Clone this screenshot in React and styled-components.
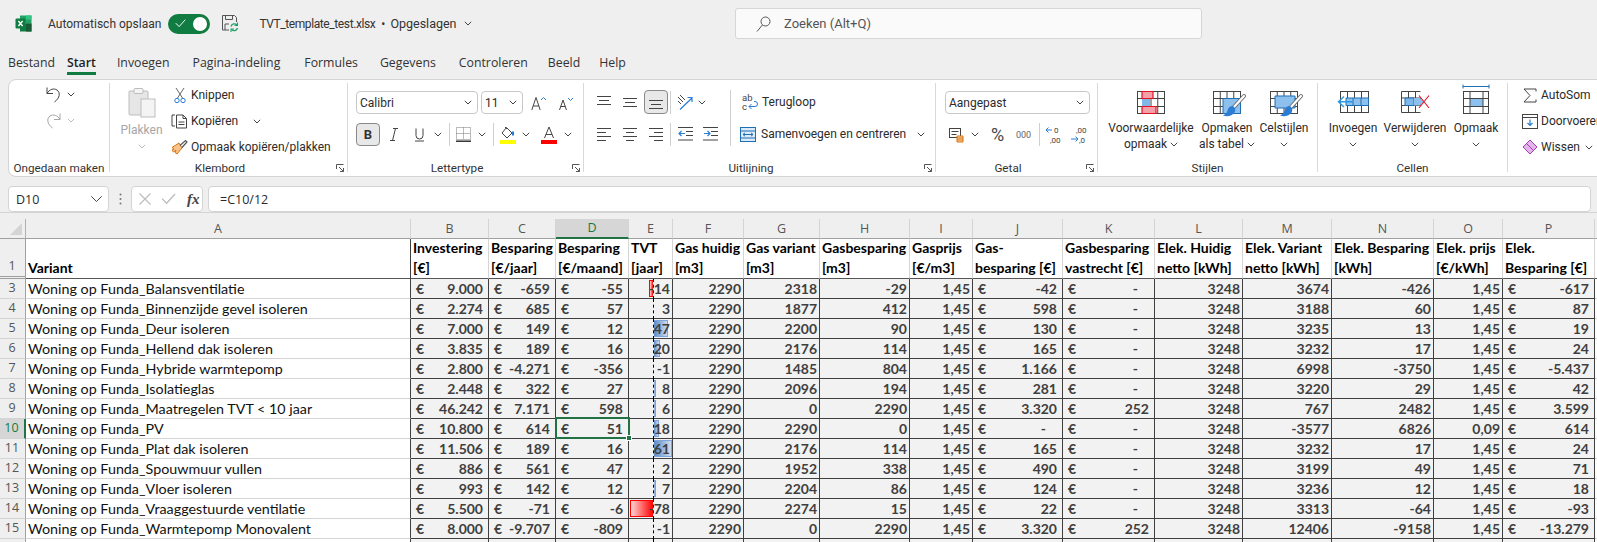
import React from 'react';
import styled, { createGlobalStyle } from 'styled-components';

const UI_FONT = 'Roboto, "Open Sans", sans-serif';

const GlobalStyle = createGlobalStyle`
  html, body {
    margin: 0;
    height: 542px;
    overflow: hidden;
    background: #efefef;
  }
`;

const Page = styled.div`
  width: 1597px;
  height: 542px;
  overflow: hidden;
  background: #efefef;
  color: #2b2b2b;
  font-family: ${UI_FONT};
  font-size: 12px;
`;

const TitleBar = styled.div`
  height: 47px;
  display: flex;
  align-items: center;
  padding-left: 15px;
`;

const TitleGroup = styled.div`
  width: 720px;
  display: flex;
  align-items: center;
  flex: none;
`;

const TitleText = styled.span`
  margin-left: ${(p) => p.$ml || 0}px;
  font-size: 12px;
  color: #333;
  white-space: nowrap;
`;

const FileName = styled(TitleText)`
  letter-spacing: -0.4px;
`;

const SaveState = styled(TitleText)`
  font-size: 12.5px;
`;

const Toggle = styled.div`
  width: 42px;
  height: 20px;
  margin-left: 7px;
  padding: 0 3px 0 7px;
  box-sizing: border-box;
  border-radius: 10px;
  background: #107c41;
  display: flex;
  align-items: center;
  justify-content: space-between;
`;

const ToggleKnob = styled.span`
  width: 14px;
  height: 14px;
  border-radius: 50%;
  background: #fff;
`;

const SearchBox = styled.div`
  width: 467px;
  height: 31px;
  padding-left: 20px;
  box-sizing: border-box;
  display: flex;
  align-items: center;
  gap: 13px;
  background: #fafafa;
  border: 1px solid #d6d6d6;
  border-radius: 3px;
  font-size: 13px;
  color: #555;
`;

const TabBar = styled.div`
  height: 32px;
  display: flex;
  align-items: flex-start;
  padding: 7px 0 0 8px;
  box-sizing: border-box;
  font-family: "Open Sans", sans-serif;
`;

const Tab = styled.div`
  margin-left: ${(p) => p.$ml}px;
  font-size: 12.3px;
  line-height: 18px;
  height: 21px;
  color: ${(p) => (p.$active ? '#1f1f1f' : '#333')};
  font-weight: ${(p) => (p.$active ? 600 : 400)};
  border-bottom: ${(p) => (p.$active ? '3px solid #107c41' : 'none')};
  box-sizing: border-box;
`;

const Ribbon = styled.div`
  margin-left: 8px;
  width: 1620px;
  height: 98px;
  box-sizing: border-box;
  display: flex;
  background: #fff;
  border: 1px solid #d4d4d4;
  border-radius: 8px;
`;

const Group = styled.div`
  width: ${(p) => p.$w}px;
  flex: none;
  display: flex;
  flex-direction: column;
  box-sizing: border-box;
  border-right: ${(p) => (p.$last ? 'none' : '1px solid #d9d9d9')};
  margin: 3px 0 4px;
`;

const GroupBody = styled.div`
  flex: 1;
  min-height: 0;
  display: flex;
  align-items: flex-start;
  padding-top: ${(p) => p.$pt || 0}px;
  margin-top: -3px;
`;

const GroupFooter = styled.div`
  height: 8px;
  display: flex;
  align-items: center;
  font-size: 11.7px;
  color: #333;
`;

const GroupLabel = styled.span`
  flex: 1;
  text-align: center;
  white-space: nowrap;
`;

const LauncherBox = styled.span`
  width: 8px;
  margin: 0 3px 0 6px;
  display: flex;
`;

const Col = styled.div`
  display: flex;
  flex-direction: column;
  gap: ${(p) => p.$gap || 0}px;
  margin-left: ${(p) => p.$ml || 0}px;
  margin-top: ${(p) => p.$mt || 0}px;
  width: ${(p) => (p.$w ? `${p.$w}px` : 'auto')};
  flex: none;
`;

const ToolRow = styled.div`
  display: flex;
  align-items: center;
  height: ${(p) => p.$h}px;
  margin-left: ${(p) => p.$ml || 0}px;
  white-space: nowrap;
`;

const Tool = styled.span`
  width: ${(p) => p.$w}px;
  margin-left: ${(p) => p.$ml || 0}px;
  flex: none;
  display: flex;
  justify-content: center;
  align-items: center;
  height: 100%;
`;

const PressedTool = styled(Tool)`
  background: #e8e8e8;
  border: 1px solid #8a8a8a;
  border-radius: 4px;
  box-sizing: border-box;
  font-weight: 700;
  font-size: 13px;
  color: #333;
`;

const PercentMark = styled(Tool)`
  font-size: 18px;
  color: #444;
`;

const ThousandMark = styled(Tool)`
  font-size: 9px;
  color: #666;
`;

const ToolLabel = styled.span`
  margin-left: ${(p) => p.$ml || 3}px;
  font-size: 12px;
  color: #2b2b2b;
`;

const Divider = styled.span`
  width: 1px;
  height: ${(p) => p.$h || 23}px;
  margin-left: ${(p) => p.$ml || 0}px;
  background: #d0d0d0;
  flex: none;
`;

const SelectBox = styled.div`
  width: ${(p) => p.$w}px;
  height: 100%;
  margin-left: ${(p) => p.$ml || 0}px;
  padding: 0 5px 0 3px;
  box-sizing: border-box;
  display: flex;
  align-items: center;
  justify-content: space-between;
  background: #fff;
  border: 1px solid #c8c8c8;
  border-radius: 4px;
  font-size: 12px;
  color: #2b2b2b;
`;

const BigButton = styled.div`
  width: ${(p) => p.$w}px;
  margin-left: ${(p) => p.$ml || 0}px;
  flex: none;
  display: flex;
  flex-direction: column;
  align-items: center;
  font-size: 12px;
  line-height: 16px;
  text-align: center;
  color: ${(p) => (p.$muted ? '#a6a6a6' : '#2b2b2b')};
  white-space: nowrap;
`;

const BigIcon = styled.span`
  height: 28px;
  margin-bottom: 4px;
  display: flex;
  align-items: center;
`;

const PasteIcon = styled(BigIcon)`
  height: 31px;
`;

const ChevLine = styled.span`
  display: flex;
  align-items: center;
  justify-content: center;
  gap: 3px;
  height: 16px;
`;

const FormulaBar = styled.div`
  height: 26px;
  margin: 9px 0 7px 8px;
  display: flex;
  align-items: stretch;
`;

const NameBox = styled.div`
  width: 101px;
  padding: 0 5px 0 7px;
  box-sizing: border-box;
  display: flex;
  align-items: center;
  justify-content: space-between;
  background: #fff;
  border: 1px solid #d4d4d4;
  border-radius: 4px;
  font-family: "Open Sans", sans-serif;
  font-size: 12.5px;
`;

const GripDots = styled.div`
  width: 22px;
  display: flex;
  align-items: center;
  justify-content: center;
`;

const FormulaTools = styled.div`
  width: 72px;
  padding-left: 7px;
  box-sizing: border-box;
  display: flex;
  align-items: center;
  gap: 10px;
  background: #fff;
  border: 1px solid #d4d4d4;
  border-radius: 4px;
`;

const FxMark = styled.span`
  font-family: "Liberation Serif", serif;
  font-style: italic;
  font-weight: 700;
  font-size: 15px;
  color: #444;
  margin-left: 1px;
`;

const FormulaInput = styled.div`
  flex: 1;
  margin: 0 6px 0 5px;
  padding-left: 11px;
  display: flex;
  align-items: center;
  background: #fff;
  border: 1px solid #d4d4d4;
  border-radius: 4px;
  font-family: "Open Sans", sans-serif;
  font-size: 12.5px;
`;

const COLUMNS = [26, 385, 78, 67, 73, 44, 71, 76, 90, 63, 90, 92, 88, 89, 102, 69, 92, 20];

const Sheet = styled.div`
  display: grid;
  grid-template-columns: ${COLUMNS.map((w) => `${w}px`).join(' ')};
  grid-template-rows: 20px 40px repeat(14, 20px);
  font-family: Lato, "Open Sans", sans-serif;
  font-size: 14px;
  line-height: 20px;
  background: #fff;
  border-top: 1px solid #d4d4d4;
  margin-top: -7px;
  padding-top: 6px;
  background-clip: content-box;
`;

const Corner = styled.div`
  background: #efefef;
  border-right: 1px solid #b0b0b0;
  border-bottom: 1px solid #a0a0a0;
  display: flex;
  align-items: flex-end;
  justify-content: flex-end;
  padding: 0 3px 3px 0;
`;

const ColHead = styled.div`
  background: ${(p) => (p.$active ? '#d6d6d6' : '#efefef')};
  color: ${(p) => (p.$active ? '#107c41' : '#555')};
  border-right: 1px solid #d4d4d4;
  border-bottom: ${(p) => (p.$active ? '2px solid #217346' : '1px solid #a0a0a0')};
  box-sizing: border-box;
  font-family: "Open Sans", sans-serif;
  font-size: 12.5px;
  display: flex;
  align-items: center;
  justify-content: center;
`;

const RowHead = styled.div`
  background: ${(p) => (p.$active ? '#d6d6d6' : '#efefef')};
  color: ${(p) => (p.$active ? '#107c41' : '#555')};
  border-right: ${(p) => (p.$active ? '2px solid #217346' : '1px solid #a0a0a0')};
  border-bottom: ${(p) => (p.$double ? '3px double #a0a0a0' : '1px solid #d4d4d4')};
  box-sizing: border-box;
  font-family: "Open Sans", sans-serif;
  font-size: 12.5px;
  padding-right: 1px;
  display: flex;
  align-items: flex-end;
  justify-content: center;
`;

const HeadCell = styled.div`
  background: #fff;
  color: #000;
  font-weight: 700;
  border-right: 1px solid ${(p) => (p.$dark ? '#3f3f3f' : '#d4d4d4')};
  border-bottom: 1px solid #555;
  box-sizing: border-box;
  padding: 0 0 0 2px;
  display: flex;
  flex-direction: column;
  justify-content: flex-end;
  white-space: nowrap;
  overflow: hidden;
`;

const NameCell = styled.div`
  background: #fff;
  color: #111;
  font-size: 14.3px;
  border-bottom: 1px solid #d4d4d4;
  box-sizing: border-box;
  padding-left: 2px;
  white-space: nowrap;
  border-right: 1px solid #3f3f3f;
`;

const DataCell = styled.div`
  position: relative;
  background: #f2f2f2;
  color: #3f3f3f;
  font-weight: 700;
  border-right: 1px solid #3f3f3f;
  border-bottom: 1px solid #3f3f3f;
  box-sizing: border-box;
  padding: 0 ${(p) => (p.$dash ? 16 : p.$money ? 5 : 2)}px 0 5px;
  display: flex;
  justify-content: ${(p) => (p.$money ? 'space-between' : 'flex-end')};
  white-space: nowrap;
`;

const Axis = styled.span`
  position: absolute;
  left: 24px;
  top: 0;
  bottom: -1px;
  border-left: 1px dashed #000;
`;

const DataBar = styled.span`
  position: absolute;
  top: 1px;
  bottom: 1px;
  box-sizing: border-box;
  ${(p) =>
    p.$negative
      ? `
    right: 19px;
    border: 1px solid #f00;
    border-right: none;
    background: linear-gradient(to right, #ffd6d6, #f00);
  `
      : `
    left: 25px;
    border: 1px solid #7fa6dc;
    border-left: none;
    background: linear-gradient(to right, #5a8ac6, #cfdcf0);
  `}
`;

const CellValue = styled.span`
  position: relative;
`;

const Selection = styled.span`
  position: absolute;
  left: -1px;
  top: -2px;
  right: -2px;
  bottom: -1px;
  border: 2px solid #217346;
  pointer-events: none;
  z-index: 2;
`;

const FillHandle = styled.span`
  position: absolute;
  right: -4px;
  bottom: -4px;
  width: 6px;
  height: 6px;
  background: #217346;
  border: 1px solid #fff;
  box-sizing: border-box;
`;

const HEADERS = [
  ['Investering', '[€]'],
  ['Besparing', '[€/jaar]'],
  ['Besparing', '[€/maand]'],
  ['TVT', '[jaar]'],
  ['Gas huidig', '[m3]'],
  ['Gas variant', '[m3]'],
  ['Gasbesparing', '[m3]'],
  ['Gasprijs', '[€/m3]'],
  ['Gas-', 'besparing [€]'],
  ['Gasbesparing', 'vastrecht [€]'],
  ['Elek. Huidig', 'netto [kWh]'],
  ['Elek. Variant', 'netto [kWh]'],
  ['Elek. Besparing', '[kWh]'],
  ['Elek. prijs', '[€/kWh]'],
  ['Elek.', 'Besparing [€]'],
];

const LETTERS = 'ABCDEFGHIJKLMNOP'.split('');
const MONEY_COLS = [0, 1, 2, 8, 9, 14];
const TVT_COL = 3;

const ROWS = [
  [3, 'Balansventilatie', '9.000', '-659', '-55', '-14', '2290', '2318', '-29', '1,45', '-42', '-', '3248', '3674', '-426', '1,45', '-617'],
  [4, 'Binnenzijde gevel isoleren', '2.274', '685', '57', '3', '2290', '1877', '412', '1,45', '598', '-', '3248', '3188', '60', '1,45', '87'],
  [5, 'Deur isoleren', '7.000', '149', '12', '47', '2290', '2200', '90', '1,45', '130', '-', '3248', '3235', '13', '1,45', '19'],
  [6, 'Hellend dak isoleren', '3.835', '189', '16', '20', '2290', '2176', '114', '1,45', '165', '-', '3248', '3232', '17', '1,45', '24'],
  [7, 'Hybride warmtepomp', '2.800', '-4.271', '-356', '-1', '2290', '1485', '804', '1,45', '1.166', '-', '3248', '6998', '-3750', '1,45', '-5.437'],
  [8, 'Isolatieglas', '2.448', '322', '27', '8', '2290', '2096', '194', '1,45', '281', '-', '3248', '3220', '29', '1,45', '42'],
  [9, 'Maatregelen TVT < 10 jaar', '46.242', '7.171', '598', '6', '2290', '0', '2290', '1,45', '3.320', '252', '3248', '767', '2482', '1,45', '3.599'],
  [10, 'PV', '10.800', '614', '51', '18', '2290', '2290', '0', '1,45', '-', '-', '3248', '-3577', '6826', '0,09', '614'],
  [11, 'Plat dak isoleren', '11.506', '189', '16', '61', '2290', '2176', '114', '1,45', '165', '-', '3248', '3232', '17', '1,45', '24'],
  [12, 'Spouwmuur vullen', '886', '561', '47', '2', '2290', '1952', '338', '1,45', '490', '-', '3248', '3199', '49', '1,45', '71'],
  [13, 'Vloer isoleren', '993', '142', '12', '7', '2290', '2204', '86', '1,45', '124', '-', '3248', '3236', '12', '1,45', '18'],
  [14, 'Vraaggestuurde ventilatie', '5.500', '-71', '-6', '-78', '2290', '2274', '15', '1,45', '22', '-', '3248', '3313', '-64', '1,45', '-93'],
  [15, 'Warmtepomp Monovalent', '8.000', '-9.707', '-809', '-1', '2290', '0', '2290', '1,45', '3.320', '252', '3248', '12406', '-9158', '1,45', '-13.279'],
];

const Chev = ({ color = '#444', size = 8 }) => (
  <svg width={size} height={size * 0.625} viewBox="0 0 8 5" fill="none" stroke={color} strokeWidth={8 / size}>
    <path d="M.8.8 4 4 7.200.8" />
  </svg>
);

const ExcelLogo = () => (
  <svg width="17" height="17" viewBox="0 0 17 17">
    <rect x="5" y="0.5" width="11.5" height="8" fill="#21a366" />
    <rect x="11" y="0.5" width="5.5" height="4" fill="#33c481" />
    <rect x="5" y="8.5" width="11.5" height="8" fill="#107c41" />
    <rect x="11" y="8.5" width="5.5" height="8" fill="#185c37" />
    <rect x="0.5" y="3.5" width="10" height="10" rx="1" fill="#107c41" />
    <path d="M3.400 6 7.600 11M7.600 6 3.400 11" stroke="#fff" strokeWidth="1.400" />
  </svg>
);

const SaveSync = () => (
  <svg width="18" height="19" viewBox="0 0 18 19" fill="none">
    <path d="M8 16H1.500V1.500h12l2 2V8" stroke="#555" />
    <path d="M4.500 1.500v4h7v-4M4 16v-6h4" stroke="#555" />
    <path d="M10 12.500a3.500 3.500 0 0 1 6-1.500M16.500 14a3.500 3.500 0 0 1-6 1.500" stroke="#21a366" strokeWidth="1.300" />
    <path d="M16.500 8.500v3h-3M10 18v-3h3" stroke="#21a366" strokeWidth="1.100" />
  </svg>
);

const SearchGlass = () => (
  <svg width="15" height="16" viewBox="0 0 15 16" fill="none" stroke="#555">
    <circle cx="9.500" cy="5.500" r="4.500" />
    <path d="M6.400 9 1 15.500" />
  </svg>
);

const Launcher = () => (
  <LauncherBox>
    <svg width="8" height="8" viewBox="0 0 8 8" fill="none" stroke="#555">
      <path d="M.5 5V.5H7.500M3 3l4.500 4.500M7.500 4v3.500H4" />
    </svg>
  </LauncherBox>
);

const UndoIcon = () => (
  <svg width="15" height="17" viewBox="0 0 15 17" fill="none" stroke="#444">
    <path d="M1 1.500v6h6" />
    <path d="M1 7.500C3.500 3 8 2 11 4c3.500 2.500 3 8-2.500 12" />
  </svg>
);

const RedoIcon = () => (
  <svg width="15" height="17" viewBox="0 0 15 17" fill="none" stroke="#a6a6a6">
    <path d="M14 1.500v6H8" />
    <path d="M14 7.500C11.500 3 7 2 4 4c-3.500 2.500-3 8 2.500 12" />
  </svg>
);

const ClipboardIcon = () => (
  <svg width="28" height="31" viewBox="0 0 28 31">
    <rect x="1" y="4" width="19" height="24" rx="1" fill="#e6e6e6" stroke="#bdbdbd" />
    <rect x="6" y="1.500" width="9" height="5" rx="1" fill="#f4f4f4" stroke="#bdbdbd" />
    <rect x="13" y="12" width="14" height="18" fill="#f4f4f4" stroke="#bdbdbd" />
  </svg>
);

const ScissorsIcon = () => (
  <svg width="12" height="17" viewBox="0 0 12 17" fill="none">
    <path d="M2 1l6.500 10M10 1 3.500 11" stroke="#666" />
    <circle cx="3" cy="13.500" r="2.200" stroke="#2b7cd3" />
    <circle cx="9" cy="13.500" r="2.200" stroke="#2b7cd3" />
  </svg>
);

const CopyIcon = () => (
  <svg width="17" height="15" viewBox="0 0 17 15" fill="none" stroke="#444">
    <path d="M4 1H1v11h3" />
    <path d="M5.500 1H12l3.500 3.500V14h-10zM12 1v3.500h3.500M7.500 8h6M7.500 10.500h6" />
  </svg>
);

const BrushIcon = () => (
  <svg width="17" height="16" viewBox="0 0 17 16" fill="none">
    <path d="M1 8.500 8 4l3 5-5 6-2-1.500L5 11l-2.500 2L1 11l2-1z" fill="#f9c48a" stroke="#d9730d" />
    <path d="M9 6.500 14.500 1.500l1.500 1.500-5 5.500" stroke="#555" strokeWidth="1.200" />
  </svg>
);

const GrowA = ({ up, big }) => (
  <svg width="16" height="16" viewBox="0 0 16 16" fill="none">
    <path d={big ? 'M.8 15 5 2.500 9.200 15M2.200 11h5.600' : 'M1.500 15 5 5l3.500 10M2.800 11.500h4.400'} stroke="#444" />
    <path d={up ? 'M10 5l2.500-2.500L15 5' : 'M10 3l2.500 2.500L15 3'} stroke="#2b7cd3" />
  </svg>
);

const ItalicI = () => (
  <svg width="8" height="13" viewBox="0 0 8 13" fill="none" stroke="#444">
    <path d="M3 .5h5M0 12.500h5M5.500.5 2.500 12.500" />
  </svg>
);

const UnderlineU = () => (
  <svg width="9" height="14" viewBox="0 0 9 14" fill="none" stroke="#444">
    <path d="M1 .5v7a3.500 3.500 0 0 0 7 0v-7M0 13h9" />
  </svg>
);

const BorderIcon = () => (
  <svg width="15" height="15" viewBox="0 0 15 15" fill="none">
    <path d="M.5.5h14v12H.5zM7.500.5v12M.5 6.500h14" stroke="#777" strokeDasharray="1 1" />
    <path d="M0 14.200h15" stroke="#222" strokeWidth="1.400" />
  </svg>
);

const FillIcon = () => (
  <svg width="16" height="18" viewBox="0 0 16 18" fill="none">
    <path d="M6.500 1.500 12 7l-5 5-5-5zM5 1l2 2" stroke="#444" />
    <path d="M13 5.500v4" stroke="#2b7cd3" strokeWidth="2" />
    <rect y="14" width="16" height="4" fill="#ffff00" />
  </svg>
);

const FontColorIcon = () => (
  <svg width="16" height="18" viewBox="0 0 16 18" fill="none">
    <path d="M3.500 12 8 1l4.500 11M5 8.500h6" stroke="#444" />
    <rect y="14" width="16" height="4" fill="#ff0000" />
  </svg>
);

const Lines = ({ rows }) => (
  <svg width="14" height="14" viewBox="0 0 14 14" fill="none" stroke="#444">
    {rows.map((r) => (
      <path key={r[0]} d={`M${r[1]} ${r[0] + 0.5}H${r[2]}`} />
    ))}
  </svg>
);

const OrientIcon = () => (
  <svg width="17" height="17" viewBox="0 0 17 17" fill="none">
    <path d="M1 3 6 8M3 1l5 5M1 7l3 3" stroke="#444" />
    <path d="M3 15.500 15 4M10.500 3.500H15V8" stroke="#2b7cd3" strokeWidth="1.200" />
  </svg>
);

const IndentIcon = ({ flip }) => (
  <svg width="15" height="14" viewBox="0 0 15 14" fill="none">
    <path d="M0 .5h15M8 4.500h7M8 8.500h7M0 13h15" stroke="#444" />
    <path
      d={flip ? 'M1 6.500h6M4.500 4 7 6.500 4.500 9' : 'M7 6.500H1M3.500 4 1 6.500 3.500 9'}
      stroke="#2b7cd3"
      strokeWidth="1.200"
    />
  </svg>
);

const WrapIcon = () => (
  <svg width="17" height="19" viewBox="0 0 17 19" fill="none" overflow="visible">
    <text x="0" y="8" fontSize="9.500" fontFamily="Roboto" fill="#444">ab</text>
    <text x="0" y="17" fontSize="9.500" fontFamily="Roboto" fill="#444">c</text>
    <path d="M7 13.500h6a2.500 2.500 0 0 0 0-5h-1M7 13.500l2.500-2.500M7 13.500 9.500 16" stroke="#2b7cd3" />
  </svg>
);

const MergeIcon = () => (
  <svg width="16" height="15" viewBox="0 0 16 15" fill="none">
    <rect x=".5" y=".5" width="15" height="14" fill="#dcebf9" stroke="#1f6fb5" />
    <path d="M.5 4h15M.5 11h15" stroke="#1f6fb5" />
    <path d="M3 7.500h10M5 5.800 3 7.500l2 1.700M11 5.800l2 1.700-2 1.700" stroke="#1f6fb5" />
  </svg>
);

const CurrencyIcon = () => (
  <svg width="16" height="16" viewBox="0 0 16 16" fill="none">
    <rect x=".5" y="1.500" width="11" height="9" fill="#fff" stroke="#444" />
    <path d="M2.500 4.500h7M2.500 7.500h5" stroke="#444" />
    <path d="M8 9h6v6H8z" fill="#fbd5ad" stroke="#d9730d" />
    <path d="M8 11h6M8 13h6" stroke="#d9730d" />
  </svg>
);

const DecimalIcon = ({ more }) => (
  <svg width="15" height="18" viewBox="0 0 15 18" fill="none" overflow="visible">
    <text x={more ? 5 : 9} y="7" fontSize="8" fontFamily="Roboto" fill="#444">{more ? ',00' : '0'}</text>
    <text x={more ? 8 : 5} y="16.500" fontSize="8" fontFamily="Roboto" fill="#444">{more ? ',0' : ',00'}</text>
    <path
      d={more ? 'M0 13h7M4.500 10.500 7 13l-2.500 2.500' : 'M7 4H1M3.500 1.500 1 4l2.500 2.500'}
      stroke="#2b7cd3"
    />
  </svg>
);

const GridLines = () => (
  <g stroke="#444">
    <rect x="1.500" y="3.500" width="27" height="22" />
    <path d="M8.250 3.500v22M15 3.500v22M21.750 3.500v22M1.500 10.500h27M1.500 18.500h27" />
  </g>
);

const Brush = () => (
  <g>
    <path d="M32 8 21.500 19.500" stroke="#666" strokeWidth="4" strokeLinecap="round" />
    <path d="M32 8 21.500 19.500" stroke="#fff" strokeWidth="2.200" strokeLinecap="round" />
    <path d="M21 18c-3 0-5 2-5.500 4.500-.3 2-2 4-4.500 5 4 1.500 9.500.5 11.500-3 1-2 1.500-4-1.500-6.500z" fill="#2b7cd3" />
  </g>
);

const CondIcon = () => (
  <svg width="30" height="28" viewBox="0 0 30 28" fill="none">
    <GridLines />
    <path d="M6 3.500h11v7H6zM6 18.500h14v7H6z" fill="#f4a0a8" />
    <path d="M6 10.500h8v8H6z" fill="#7fb8e8" />
    <path d="M6 3.500h11v7H6zM6 18.500h14v7H6z" stroke="#e81123" strokeWidth="1.200" />
  </svg>
);

const TableIcon = () => (
  <svg width="30" height="28" viewBox="0 0 30 28" fill="none" overflow="visible">
    <GridLines />
    <path d="M11 10.500h17.500v15H11z" fill="#8dc0ec" stroke="#1f6fb5" />
    <Brush />
  </svg>
);

const StyleIcon = () => (
  <svg width="30" height="28" viewBox="0 0 30 28" fill="none" overflow="visible">
    <GridLines />
    <path d="M6 8h20v12H6z" fill="#8dc0ec" stroke="#1f6fb5" />
    <Brush />
  </svg>
);

const InsertIcon = () => (
  <svg width="32" height="28" viewBox="0 0 32 28" fill="none">
    <rect x="3.500" y="3.500" width="28" height="21" stroke="#444" />
    <path d="M10.500 3.500v21M17.500 3.500v21M24.500 3.500v21" stroke="#444" />
    <path d="M9 10h22.500v7.500H9z" fill="#8dc0ec" stroke="#1f6fb5" />
    <path d="M16 10v7.500M24 10v7.500" stroke="#1f6fb5" />
    <path d="M15 13.700H2M7 8.500l-5.500 5.200L7 19" stroke="#2b9be8" strokeWidth="1.500" />
  </svg>
);

const DeleteIcon = () => (
  <svg width="31" height="28" viewBox="0 0 31 28" fill="none">
    <path d="M1.500 3.500h19M1.500 24.500h19M1.500 3.500v21M8.500 3.500v21M15.500 3.500v21" stroke="#444" />
    <path d="M1.500 10h19v7.500H1.500z" fill="#fff" stroke="#444" />
    <path d="M5 10h9v7.500H5z" fill="#7fb8e8" stroke="#1f6fb5" />
    <path d="M14 10h6l4 3.700-4 3.800h-6z" fill="#8dc0ec" />
    <path d="M19 7.500 29 20M29 7.500 19 20" stroke="#e81123" strokeWidth="1.100" />
  </svg>
);

const FormatIcon = () => (
  <svg width="28" height="28" viewBox="0 0 28 28" fill="none" overflow="visible">
    <path d="M1 -1.500h26M1 -3.500v4M27 -3.500v4" stroke="#1f6fb5" />
    <rect x="1.500" y="3.500" width="25" height="22" stroke="#444" />
    <path d="M8 10.500h13v8H8z" fill="#8dc0ec" />
    <path d="M8 3.500v22M21 3.500v22M1.500 10.500h25M1.500 18.500h25" stroke="#444" />
  </svg>
);

const SigmaIcon = () => (
  <svg width="14" height="15" viewBox="0 0 14 15" fill="none" stroke="#444">
    <path d="M13 3.500V1H1l6 6.500L1 14h12v-2.500" />
  </svg>
);

const FillDownIcon = () => (
  <svg width="16" height="15" viewBox="0 0 16 15" fill="none">
    <rect x=".5" y=".5" width="15" height="14" stroke="#444" />
    <path d="M.5 3.500h15" stroke="#444" />
    <path d="M8 5.500v6M5.500 9 8 11.500 10.500 9" stroke="#2b7cd3" strokeWidth="1.200" />
  </svg>
);

const EraserIcon = () => (
  <svg width="16" height="16" viewBox="0 0 16 16" fill="none" stroke="#a63fb5">
    <path d="M8 1 15 8l-7 7-7-7z" fill="#e3b5ea" />
    <path d="M4.500 4.500 11.500 11.500" />
  </svg>
);

const CrossMark = () => (
  <svg width="12" height="12" viewBox="0 0 12 12" fill="none" stroke="#bdbdbd" strokeWidth="1.200">
    <path d="M.5.5l11 11M11.500.5l-11 11" />
  </svg>
);

const CheckMark = ({ color = '#bdbdbd', size = 15 }) => (
  <svg width={size} height={size * 0.75} viewBox="0 0 16 12" fill="none" stroke={color} strokeWidth="1.400">
    <path d="M1 6l5 5L15 1" />
  </svg>
);

const App = () => {
  return (
    <Page>
      <GlobalStyle />
      <TitleBar>
        <TitleGroup>
          <ExcelLogo />
          <TitleText $ml={16}>Automatisch opslaan</TitleText>
          <Toggle>
            <CheckMark color="#fff" size={11} />
            <ToggleKnob />
          </Toggle>
          <Tool $w={18} $ml={11}><SaveSync /></Tool>
          <FileName $ml={20}>TVT_template_test.xlsx</FileName>
          <TitleText $ml={6}>•</TitleText>
          <SaveState $ml={5}>Opgeslagen</SaveState>
          <Tool $w={8} $ml={7}><Chev /></Tool>
        </TitleGroup>
        <SearchBox>
          <SearchGlass />
          Zoeken (Alt+Q)
        </SearchBox>
      </TitleBar>

      <TabBar>
        <Tab $ml={0}>Bestand</Tab>
        <Tab $ml={12} $active>Start</Tab>
        <Tab $ml={21}>Invoegen</Tab>
        <Tab $ml={23}>Pagina-indeling</Tab>
        <Tab $ml={24}>Formules</Tab>
        <Tab $ml={22}>Gegevens</Tab>
        <Tab $ml={23}>Controleren</Tab>
        <Tab $ml={20}>Beeld</Tab>
        <Tab $ml={19}>Help</Tab>
      </TabBar>

      <Ribbon>
        <Group $w={101}>
          <GroupBody $pt={1}>
            <Col>
              <ToolRow $h={26}>
                <Tool $w={15} $ml={37}><UndoIcon /></Tool>
                <Tool $w={8} $ml={6}><Chev /></Tool>
              </ToolRow>
              <ToolRow $h={26}>
                <Tool $w={15} $ml={37}><RedoIcon /></Tool>
                <Tool $w={8} $ml={6}><Chev color="#bbb" /></Tool>
              </ToolRow>
            </Col>
          </GroupBody>
          <GroupFooter>
            <GroupLabel>Ongedaan maken</GroupLabel>
          </GroupFooter>
        </Group>

        <Group $w={238}>
          <GroupBody $pt={7}>
            <BigButton $w={41} $ml={11} $muted>
              <PasteIcon><ClipboardIcon /></PasteIcon>
              Plakken
              <ChevLine><Chev color="#bbb" /></ChevLine>
            </BigButton>
            <Col $ml={9} $mt={-5}>
              <ToolRow $h={26}>
                <Tool $w={17}><ScissorsIcon /></Tool>
                <ToolLabel>Knippen</ToolLabel>
              </ToolRow>
              <ToolRow $h={26}>
                <Tool $w={17}><CopyIcon /></Tool>
                <ToolLabel>Kopiëren</ToolLabel>
                <Tool $w={8} $ml={15}><Chev /></Tool>
              </ToolRow>
              <ToolRow $h={26}>
                <Tool $w={17}><BrushIcon /></Tool>
                <ToolLabel>Opmaak kopiëren/plakken</ToolLabel>
              </ToolRow>
            </Col>
          </GroupBody>
          <GroupFooter>
            <GroupLabel>Klembord</GroupLabel>
            <Launcher />
          </GroupFooter>
        </Group>

        <Group $w={236}>
          <GroupBody $pt={11}>
            <Col $gap={9}>
              <ToolRow $h={23}>
                <SelectBox $w={122} $ml={8}>Calibri<Chev /></SelectBox>
                <SelectBox $w={42} $ml={3}>11<Chev /></SelectBox>
                <Tool $w={16} $ml={8}><GrowA up big /></Tool>
                <Tool $w={16} $ml={11}><GrowA /></Tool>
              </ToolRow>
              <ToolRow $h={23}>
                <PressedTool $w={24} $ml={8}>B</PressedTool>
                <Tool $w={8} $ml={10}><ItalicI /></Tool>
                <Tool $w={9} $ml={17}><UnderlineU /></Tool>
                <Tool $w={8} $ml={10}><Chev /></Tool>
                <Divider $ml={7} />
                <Tool $w={15} $ml={6}><BorderIcon /></Tool>
                <Tool $w={8} $ml={7}><Chev /></Tool>
                <Divider $ml={7} />
                <Tool $w={16} $ml={6}><FillIcon /></Tool>
                <Tool $w={8} $ml={6}><Chev /></Tool>
                <Tool $w={16} $ml={11}><FontColorIcon /></Tool>
                <Tool $w={8} $ml={7}><Chev /></Tool>
              </ToolRow>
            </Col>
          </GroupBody>
          <GroupFooter>
            <GroupLabel>Lettertype</GroupLabel>
            <Launcher />
          </GroupFooter>
        </Group>

        <Group $w={352}>
          <GroupBody $pt={10}>
            <Col $gap={8} $w={146}>
              <ToolRow $h={24}>
                <Tool $w={14} $ml={13}><Lines rows={[[1, 0, 14], [5, 2, 12], [9, 0, 14]]} /></Tool>
                <Tool $w={14} $ml={12}><Lines rows={[[3, 0, 14], [7, 2, 12], [11, 0, 14]]} /></Tool>
                <PressedTool $w={24} $ml={7}><Lines rows={[[5, 0, 14], [9, 2, 12], [13, 0, 14]]} /></PressedTool>
                <Divider $ml={2} />
                <Tool $w={17} $ml={6}><OrientIcon /></Tool>
                <Tool $w={8} $ml={4}><Chev /></Tool>
              </ToolRow>
              <ToolRow $h={24}>
                <Tool $w={14} $ml={13}><Lines rows={[[1, 0, 14], [5, 0, 9], [9, 0, 14], [13, 0, 9]]} /></Tool>
                <Tool $w={14} $ml={12}><Lines rows={[[1, 0, 14], [5, 3, 11], [9, 0, 14], [13, 3, 11]]} /></Tool>
                <Tool $w={14} $ml={12}><Lines rows={[[1, 0, 14], [5, 5, 14], [9, 0, 14], [13, 5, 14]]} /></Tool>
                <Divider $ml={7} />
                <Tool $w={15} $ml={7}><IndentIcon /></Tool>
                <Tool $w={15} $ml={10}><IndentIcon flip /></Tool>
              </ToolRow>
            </Col>
            <Divider $h={56} />
            <Col $gap={8}>
              <ToolRow $h={24} $ml={11}>
                <Tool $w={17}><WrapIcon /></Tool>
                <ToolLabel $ml={3}>Terugloop</ToolLabel>
              </ToolRow>
              <ToolRow $h={24} $ml={9}>
                <Tool $w={16}><MergeIcon /></Tool>
                <ToolLabel $ml={5}>Samenvoegen en centreren</ToolLabel>
                <Tool $w={8} $ml={11}><Chev /></Tool>
              </ToolRow>
            </Col>
          </GroupBody>
          <GroupFooter>
            <GroupLabel>Uitlijning</GroupLabel>
            <Launcher />
          </GroupFooter>
        </Group>

        <Group $w={162}>
          <GroupBody $pt={11}>
            <Col $gap={9}>
              <ToolRow $h={23}>
                <SelectBox $w={145} $ml={9}>Aangepast<Chev /></SelectBox>
              </ToolRow>
              <ToolRow $h={23}>
                <Tool $w={16} $ml={13}><CurrencyIcon /></Tool>
                <Tool $w={8} $ml={6}><Chev /></Tool>
                <PercentMark $w={15} $ml={11}>%</PercentMark>
                <ThousandMark $w={15} $ml={11}>000</ThousandMark>
                <Divider $ml={8} />
                <Tool $w={15} $ml={5}><DecimalIcon /></Tool>
                <Tool $w={15} $ml={11}><DecimalIcon more /></Tool>
              </ToolRow>
            </Col>
          </GroupBody>
          <GroupFooter>
            <GroupLabel>Getal</GroupLabel>
            <Launcher />
          </GroupFooter>
        </Group>

        <Group $w={220}>
          <GroupBody $pt={8}>
            <BigButton $w={86} $ml={10}>
              <BigIcon><CondIcon /></BigIcon>
              Voorwaardelijke
              <ChevLine>opmaak <Chev /></ChevLine>
            </BigButton>
            <BigButton $w={58} $ml={4}>
              <BigIcon><TableIcon /></BigIcon>
              Opmaken
              <ChevLine>als tabel <Chev /></ChevLine>
            </BigButton>
            <BigButton $w={50} $ml={3}>
              <BigIcon><StyleIcon /></BigIcon>
              Celstijlen
              <ChevLine><Chev /></ChevLine>
            </BigButton>
          </GroupBody>
          <GroupFooter>
            <GroupLabel>Stijlen</GroupLabel>
          </GroupFooter>
        </Group>

        <Group $w={190}>
          <GroupBody $pt={8}>
            <BigButton $w={54} $ml={8}>
              <BigIcon><InsertIcon /></BigIcon>
              Invoegen
              <ChevLine><Chev /></ChevLine>
            </BigButton>
            <BigButton $w={66} $ml={2}>
              <BigIcon><DeleteIcon /></BigIcon>
              Verwijderen
              <ChevLine><Chev /></ChevLine>
            </BigButton>
            <BigButton $w={50} $ml={3}>
              <BigIcon><FormatIcon /></BigIcon>
              Opmaak
              <ChevLine><Chev /></ChevLine>
            </BigButton>
          </GroupBody>
          <GroupFooter>
            <GroupLabel>Cellen</GroupLabel>
          </GroupFooter>
        </Group>

        <Group $w={120} $last>
          <GroupBody $pt={2}>
            <Col $ml={13}>
              <ToolRow $h={26}>
                <Tool $w={17}><SigmaIcon /></Tool>
                <ToolLabel>AutoSom</ToolLabel>
              </ToolRow>
              <ToolRow $h={26}>
                <Tool $w={17}><FillDownIcon /></Tool>
                <ToolLabel>Doorvoeren</ToolLabel>
              </ToolRow>
              <ToolRow $h={26}>
                <Tool $w={17}><EraserIcon /></Tool>
                <ToolLabel>Wissen</ToolLabel>
                <Tool $w={8} $ml={5}><Chev /></Tool>
              </ToolRow>
            </Col>
          </GroupBody>
        </Group>
      </Ribbon>

      <FormulaBar>
        <NameBox>D10<Chev size={13} /></NameBox>
        <GripDots>
          <svg width="3" height="12" viewBox="0 0 3 12" fill="#777">
            <circle cx="1.500" cy="1.500" r="1" />
            <circle cx="1.500" cy="6" r="1" />
            <circle cx="1.500" cy="10.500" r="1" />
          </svg>
        </GripDots>
        <FormulaTools>
          <CrossMark />
          <CheckMark />
          <FxMark>fx</FxMark>
        </FormulaTools>
        <FormulaInput>=C10/12</FormulaInput>
      </FormulaBar>

      <Sheet>
        <Corner>
          <svg width="12" height="12" viewBox="0 0 12 12"><path d="M12 0v12H0z" fill="#d4d4d4" /></svg>
        </Corner>
        {LETTERS.map((l) => (
          <ColHead key={l} $active={l === 'D'}>{l}</ColHead>
        ))}
        <ColHead />

        <RowHead $double>1</RowHead>
        <HeadCell $dark>Variant</HeadCell>
        {HEADERS.map((h, i) => (
          <HeadCell key={i}>
            <span>{h[0]}</span>
            <span>{h[1]}</span>
          </HeadCell>
        ))}
        <HeadCell />

        {ROWS.map((row) => {
          const [num, name, ...values] = row;
          return (
            <React.Fragment key={num}>
              <RowHead $active={num === 10}>{num}</RowHead>
              <NameCell>Woning op Funda_{name}</NameCell>
              {values.map((v, i) => {
                const money = MONEY_COLS.includes(i);
                if (i === TVT_COL) {
                  const n = Number(v);
                  const showBar = n < -1 || n > 5;
                  return (
                    <DataCell key={i}>
                      {showBar && <DataBar $negative={n < 0} style={{ width: Math.abs(n) * 0.29 }} />}
                      <Axis />
                      <CellValue>{v}</CellValue>
                    </DataCell>
                  );
                }
                return (
                  <DataCell key={i} $money={money} $dash={money && v === '-'}>
                    {money && <span>€</span>}
                    <span>{v}</span>
                    {num === 10 && i === 2 && (
                      <Selection>
                        <FillHandle />
                      </Selection>
                    )}
                  </DataCell>
                );
              })}
              <NameCell />
            </React.Fragment>
          );
        })}
        <RowHead />
        <NameCell />
        {HEADERS.map((h, i) => (
          <DataCell key={i}>{i === TVT_COL && <Axis />}</DataCell>
        ))}
      </Sheet>
    </Page>
  );
};

export default App;
